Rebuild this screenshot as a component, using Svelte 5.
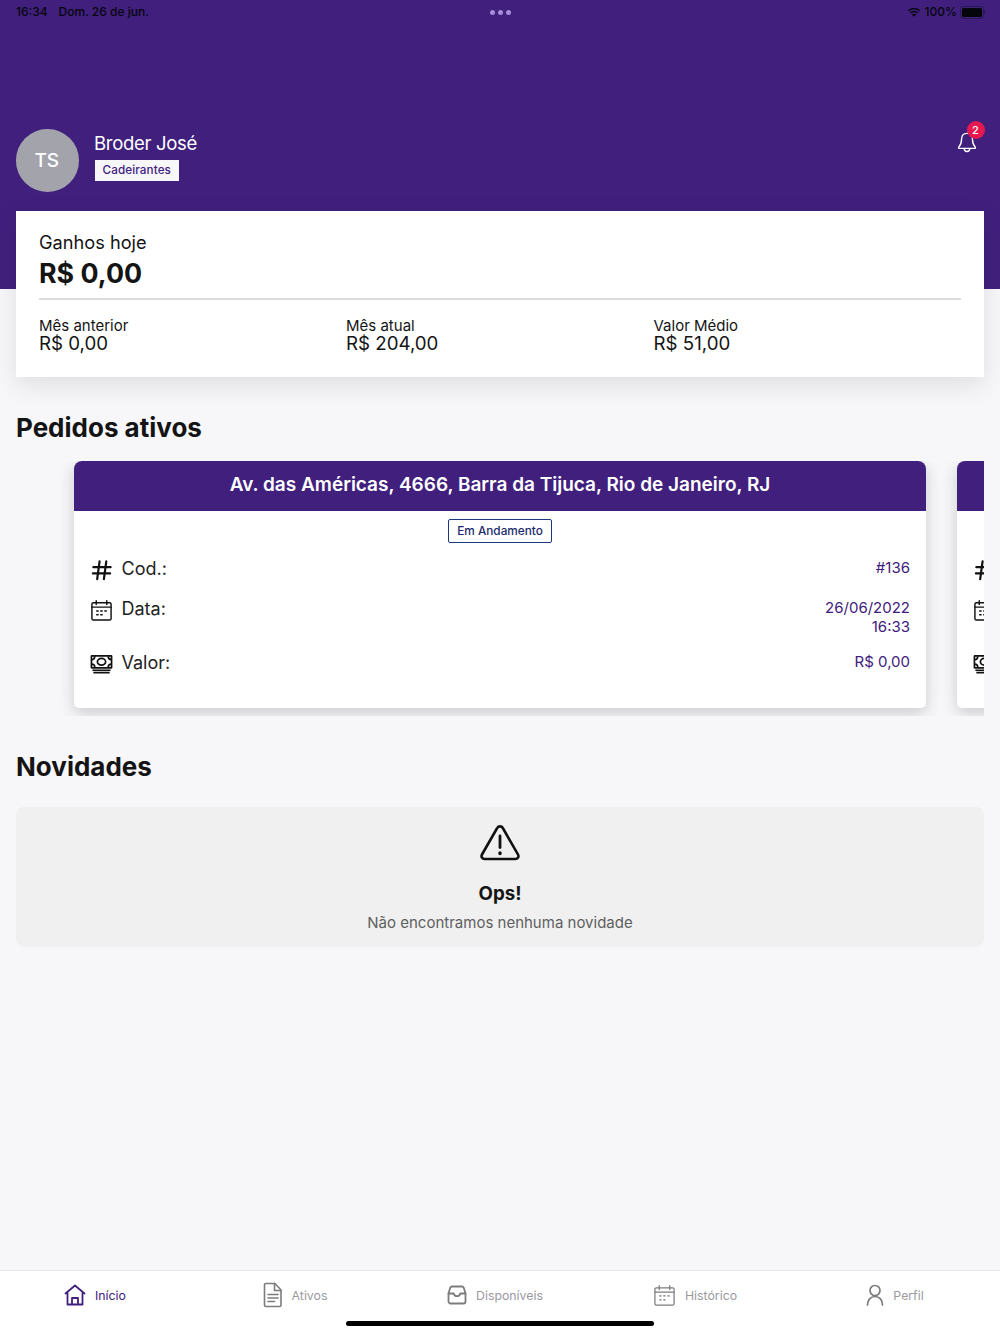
<script>
  const stats = [
    { label: 'Mês anterior', value: 'R$ 0,00' },
    { label: 'Mês atual', value: 'R$ 204,00' },
    { label: 'Valor Médio', value: 'R$ 51,00' }
  ];
</script>

{#snippet hash()}
  <svg class="ico" viewBox="0 0 24 24" fill="none" stroke="#111" stroke-width="2.300" stroke-linecap="round"><path d="M10 2.500 7.500 21M17 2.500 14.500 21M3.500 8.500h18M3 15h18"/></svg>
{/snippet}
{#snippet calendar(color, sw)}
  <svg class="ico" viewBox="0 0 24 24" fill="none" stroke={color} stroke-width={sw} stroke-linecap="round" stroke-linejoin="round"><rect x="2" y="4" width="20" height="18" rx="1.500"/><path d="M2 8.500h20M6.500 1.800v4M17.500 1.800v4M7 12.500h1.500M11.200 12.500h1.500M15.500 12.500h1.500M7 16.500h1.500M11.200 16.500h1.500"/></svg>
{/snippet}
{#snippet money()}
  <svg class="ico money" viewBox="0 0 24 24" fill="none" stroke="#111" stroke-width="1.800"><rect x="1.500" y="3" width="21" height="12.500" rx="0.500"/><ellipse cx="12" cy="9.200" rx="4.300" ry="3.500"/><path d="M1.500 7c2 0 3.500-1.500 3.500-3.500M22.500 7c-2 0-3.500-1.500-3.500-3.500M1.500 11.500c2 0 3.500 1.500 3.500 3.500M22.500 11.500c-2 0-3.500 1.500-3.500 3.500M2.500 18h19M3.500 20.500h17"/></svg>
{/snippet}

{#snippet orderCard()}
  <article class="order">
    <h3>Av. das Américas, 4666, Barra da Tijuca, Rio de Janeiro, RJ</h3>
    <div class="status-row"><span class="status-tag">Em Andamento</span></div>
    <div class="rows">
      <div class="row r1">
        <div class="key">{@render hash()}<span>Cod.:</span></div>
        <div class="val">#136</div>
      </div>
      <div class="row r2">
        <div class="key">{@render calendar('#111', 1.5)}<span>Data:</span></div>
        <div class="val">26/06/2022<br />16:33</div>
      </div>
      <div class="row r3">
        <div class="key">{@render money()}<span>Valor:</span></div>
        <div class="val">R$ 0,00</div>
      </div>
    </div>
  </article>
{/snippet}

<div class="page">
  <header class="hero">
    <div class="statusbar">
      <div class="sb-left"><span>16:34</span><span>Dom. 26 de jun.</span></div>
      <div class="dots"><i></i><i></i><i></i></div>
      <div class="sb-right">
        <svg width="14" height="11" viewBox="0 0 14 11" fill="#05050c"><path d="M7 2.200c2 0 3.800.8 5.200 2.100l1-1.100A9 9 0 0 0 7 .7 9 9 0 0 0 .8 3.200l1 1.100A7.500 7.500 0 0 1 7 2.200Z"/><path d="M7 5.200c1.200 0 2.300.5 3.100 1.200l1-1.100A6 6 0 0 0 7 3.700a6 6 0 0 0-4.100 1.600l1 1.100C4.700 5.700 5.800 5.200 7 5.200Z"/><path d="M7 6.700c-.8 0-1.500.3-2 .8L7 9.800l2-2.300c-.5-.5-1.200-.8-2-.8Z"/></svg>
        <span class="pct">100%</span>
        <span class="battery"><b></b></span>
        <span class="nub"></span>
      </div>
    </div>
    <div class="profile">
      <div class="avatar">TS</div>
      <div class="who">
        <div class="name">Broder José</div>
        <span class="tag">Cadeirantes</span>
      </div>
      <div class="bell">
        <svg width="20" height="22" viewBox="0 0 22 24" fill="none" stroke="#fff" stroke-width="1.500" stroke-linejoin="round" stroke-linecap="round"><path d="M11 2.500c-3.800 0-6 2.800-6 6.500 0 4.500-1 6.500-3 8.500-.6.700-.2 1.500.6 1.500h16.800c.8 0 1.200-.8.600-1.500-2-2-3-4-3-8.500 0-3.700-2.200-6.500-6-6.500Z"/><path d="M8 19.500c0 1.900 1.300 3 3 3s3-1.100 3-3"/></svg>
        <span class="badge">2</span>
      </div>
    </div>
  </header>

  <section class="earn">
    <div class="earn-label">Ganhos hoje</div>
    <div class="earn-value">R$ 0,00</div>
    <div class="stats">
      {#each stats as s}
        <div class="stat">
          <div class="stat-label">{s.label}</div>
          <div class="stat-value">{s.value}</div>
        </div>
      {/each}
    </div>
  </section>

  <h2 class="title t1">Pedidos ativos</h2>
  <div class="carousel">
    <div class="track">
      {@render orderCard()}
      {@render orderCard()}
    </div>
  </div>

  <h2 class="title t2">Novidades</h2>
  <section class="empty">
    <svg width="40" height="36" viewBox="0 0 40 36" fill="none" stroke="#111" stroke-width="2.600" stroke-linejoin="round" stroke-linecap="round"><path d="M17.200 3 2 29.500C.8 31.700 2.200 34 4.600 34h30.800c2.400 0 3.800-2.300 2.600-4.500L22.800 3c-1.200-2.200-4.400-2.200-5.600 0Z"/><path d="M20 11v11.500" stroke-width="2.800"/><path d="M20 28v.6" stroke-width="3.400"/></svg>
    <div class="ops">Ops!</div>
    <div class="ops-sub">Não encontramos nenhuma novidade</div>
  </section>

  <div class="spacer"></div>

  <nav class="tabs">
    <div class="tab active">
      <svg width="22" height="24" viewBox="0 0 22 24" fill="none" stroke="#41207d" stroke-width="1.800" stroke-linejoin="round" stroke-linecap="round"><path d="M1.500 10.500 11 2.500l9.500 8M3.500 10v11.500h15V10M8 21.500V15h6v6.500"/></svg>
      <span>Início</span>
    </div>
    <div class="tab">
      <svg width="20" height="26" viewBox="0 0 20 26" fill="none" stroke="#7c7c7c" stroke-width="1.600" stroke-linejoin="round" stroke-linecap="round"><path d="M3 1.500h9l6 6.500v15a1.500 1.500 0 0 1-1.500 1.500h-13.500A1.500 1.500 0 0 1 1.500 23V3A1.500 1.500 0 0 1 3 1.500Z"/><path d="M11.500 1.500V8.500H18M5 12.500h10M5 16h10M5 19.500h6.500"/></svg>
      <span>Ativos</span>
    </div>
    <div class="tab">
      <svg width="20" height="20" viewBox="0 0 20 20" fill="none" stroke="#7c7c7c" stroke-width="1.800" stroke-linejoin="round" stroke-linecap="round"><path d="M5 1.500h10c.8 0 1.400.4 1.700 1.100l1.800 5.900v8a2 2 0 0 1-2 2h-13a2 2 0 0 1-2-2v-8l1.800-5.900C3.600 1.900 4.200 1.500 5 1.500Z"/><path d="M1.500 8.500h5.200c.4 1.700 1.600 2.700 3.300 2.700s2.900-1 3.300-2.700h5.200"/></svg>
      <span>Disponíveis</span>
    </div>
    <div class="tab">
      {@render calendar('#7c7c7c', 1.3)}
      <span>Histórico</span>
    </div>
    <div class="tab">
      <svg width="18" height="22" viewBox="0 0 18 22" fill="none" stroke="#7c7c7c" stroke-width="1.700" stroke-linecap="round"><circle cx="9" cy="6.500" r="5"/><path d="M1.500 21c0-5 3-8.500 7.500-8.500s7.500 3.500 7.500 8.500"/></svg>
      <span>Perfil</span>
    </div>
    <div class="home-bar"></div>
  </nav>
</div>

<style>
  :global(body) { margin: 0; }
  .page {
    width: 1000px; height: 1334px; background: #f7f7fa; display: flex; flex-direction: column;
    font-family: Inter, "Liberation Sans", sans-serif; color: #141414; overflow: hidden;
  }
  .hero { background: #41207d; height: 289px; padding: 0 16px; box-sizing: border-box; flex: none; }
  .statusbar {
    height: 24px; display: grid; grid-template-columns: 1fr auto 1fr; align-items: center;
    font-size: 12px; color: #05050c; font-weight: 500; line-height: 24px;
  }
  .sb-left { display: flex; gap: 11px; }
  .dots { display: flex; gap: 3px; }
  .dots i { width: 5px; height: 5px; border-radius: 50%; background: #a78bdc; display: block; }
  .sb-right { display: flex; justify-content: flex-end; align-items: center; gap: 4px; margin-right: -1px; }
  .pct { margin-right: -1px; }
  .battery {
    width: 20px; height: 9px; border: 1px solid #2c1a55; border-radius: 3px; padding: 1px; display: block; box-sizing: content-box;
  }
  .battery b { display: block; width: 100%; height: 100%; background: #05050c; border-radius: 1.500px; }
  .nub { width: 1px; height: 4px; background: #2c1a55; margin-left: -4px; }
  .profile { display: flex; align-items: flex-start; margin-top: 105px; }
  .avatar {
    width: 62.500px; height: 62.500px; border-radius: 50%; background: #a3a3ab; color: #fff;
    display: flex; align-items: center; justify-content: center; font-size: 19px; font-weight: 500; flex: none;
    padding-right: 1px; box-sizing: border-box;
  }
  .who { margin-left: 15.500px; padding-top: 2px; flex: 1; }
  .name { color: #fff; font-size: 18.500px; line-height: 25px; letter-spacing: -0.300px; }
  .tag {
    display: inline-block; background: #f7f7fa; color: #41207d; font-size: 11.700px; font-weight: 500;
    line-height: 21px; padding: 0 7.500px; margin-top: 4px; letter-spacing: 0.100px; margin-left: 1px;
  }
  .bell { position: relative; width: 20px; height: 22px; margin-right: 7px; margin-top: 2px; }
  .badge {
    position: absolute; left: 9.500px; top: -10px; width: 18px; height: 18px; border-radius: 50%; background: #e5194f;
    color: #fff; font-size: 11px; line-height: 18px; text-align: center; font-weight: 500;
  }
  .earn {
    background: #fff; margin: -78px 16px 0; height: 166px; box-sizing: border-box; padding: 20px 23px 0 23px;
    box-shadow: 0 8px 24px rgba(0,0,0,0.1); position: relative; flex: none;
  }
  .earn-label { font-size: 18.200px; line-height: 22px; }
  .earn-value { font-size: 26.800px; font-weight: 700; line-height: 36px; padding-bottom: 7px; border-bottom: 2px solid #dcdcdc; margin-top: 2px; }
  .stats { display: grid; grid-template-columns: 307px 307.500px 1fr; margin-top: 17px; }
  .stat-label { font-size: 15px; line-height: 17px; }
  .stat-value { font-size: 18.700px; line-height: 20px; }
  .title { font-size: 26px; font-weight: 700; line-height: 32px; margin: 0 16px; flex: none; }
  .t1 { margin-top: 35px; }
  .t2 { margin-top: 35px; }
  .carousel { margin: 17px 16px 0; height: 255px; overflow: hidden; flex: none; }
  .track { display: flex; gap: 31px; padding-left: 58px; }
  .order {
    flex: none; width: 852px; height: 247px; background: #fff; border-radius: 8px 8px 5px 5px;
    box-shadow: 0 5px 16px rgba(0,0,0,0.18); overflow: hidden;
  }
  .order h3 {
    margin: 0; background: #41207d; color: #fff; height: 50px; line-height: 48px; text-align: center;
    font-size: 19px; font-weight: 600; white-space: nowrap;
  }
  .status-row { display: flex; justify-content: center; padding-top: 8px; }
  .status-tag {
    border: 1px solid #1a3a7a; color: #1b2a6b; border-radius: 2px; font-size: 11.800px; font-weight: 500;
    line-height: 22px; padding: 0 8px; background: #fff;
  }
  .rows { padding: 0 16px 0 16px; }
  .row { display: flex; justify-content: space-between; align-items: flex-start; }
  .r1 { margin-top: 13px; height: 40px; }
  .r2 { height: 54px; }
  .key { display: flex; align-items: flex-start; gap: 8.500px; font-size: 18px; line-height: 26px; color: #222; }
  .ico { width: 23px; height: 23px; display: block; flex: none; margin-top: 3px; }
  .val { color: #41207d; font-size: 15px; line-height: 19px; text-align: right; padding-top: 2px; }
  .empty {
    margin: 24px 16px 0; height: 140px; background: #f0f0f0; border-radius: 8px; box-sizing: border-box;
    display: flex; flex-direction: column; align-items: center; padding-top: 18px; flex: none;
  }
  .ops { font-size: 18.700px; font-weight: 700; line-height: 24px; margin-top: 21px; }
  .ops-sub { font-size: 15px; line-height: 20px; margin-top: 7px; color: #5f5f5f; }
  .spacer { flex: 1; }
  .tabs {
    height: 64px; background: #fff; border-top: 1px solid #e6e6ea; display: grid; grid-template-columns: repeat(5, 1fr);
    position: relative; flex: none; box-sizing: border-box; align-items: start;
  }
  .tab { display: flex; align-items: center; justify-content: center; gap: 9px; height: 48px; font-size: 12.300px; color: #9a9a9f; padding-right: 10px; }
  .tab.active { color: #41207d; }
  .tab .ico { margin-top: 0; width: 23px; height: 23px; }
  .home-bar { position: absolute; left: 346px; width: 308px; top: 50px; height: 5px; border-radius: 3px; background: #000; }
</style>
